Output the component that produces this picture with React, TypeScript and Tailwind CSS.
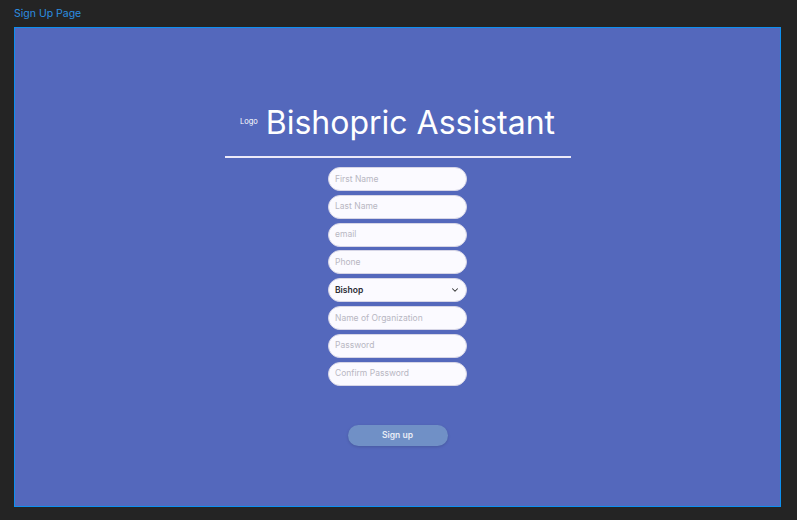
import { ChevronDown } from "lucide-react";

const fields = [
  "First Name",
  "Last Name",
  "email",
  "Phone",
  null,
  "Name of Organization",
  "Password",
  "Confirm Password",
];

function Field({ placeholder }: { placeholder: string }) {
  return (
    <div className="flex h-[24px] w-[139px] items-center rounded-full border border-[#d6d5e6] bg-[#fbfaff] px-[6px] text-[8.5px] text-[#b8b7c2]">
      {placeholder}
    </div>
  );
}

function RoleSelect() {
  return (
    <div className="flex h-[24px] w-[139px] items-center justify-between rounded-full border border-[#d6d5e6] bg-[#fbfaff] pl-[6px] pr-[6px] text-[8.5px] font-semibold text-[#2a2a33]">
      <span>Bishop</span>
      <ChevronDown size={10} strokeWidth={2.5} className="text-[#333]" />
    </div>
  );
}

export default function App() {
  return (
    <div className="h-[520px] w-[797px] bg-[#242424] font-['Inter',sans-serif]">
      <div className="h-[27px] pl-[14px] pt-[8px] text-[10.5px] leading-[12px] text-[#2c8ee0]">
        Sign Up Page
      </div>
      <div className="ml-[14px] flex h-[480px] w-[767px] flex-col items-center border-[1.5px] border-[#0d8ff0] bg-[#5468bc]">
        <div className="mt-[73px] flex items-center">
          <span className="mr-[8px] mt-[-1px] text-[7.5px] text-white">Logo</span>
          <span className="text-[32px] font-normal leading-[43px] text-white">
            Bishopric Assistant
          </span>
        </div>
        <div className="mt-[12px] h-[2px] w-[346px] bg-[#eceaf8]" />
        <div className="mt-[9px] flex flex-col gap-[3.8px]">
          {fields.map((f, i) =>
            f === null ? <RoleSelect key={i} /> : <Field key={i} placeholder={f} />
          )}
        </div>
        <button className="mt-[39px] h-[21px] w-[100px] rounded-full bg-[#7090c6] text-[8.5px] font-semibold text-[#e8ecf6] shadow-[0_1px_3px_rgba(0,0,0,0.15)]">
          Sign up
        </button>
      </div>
    </div>
  );
}
